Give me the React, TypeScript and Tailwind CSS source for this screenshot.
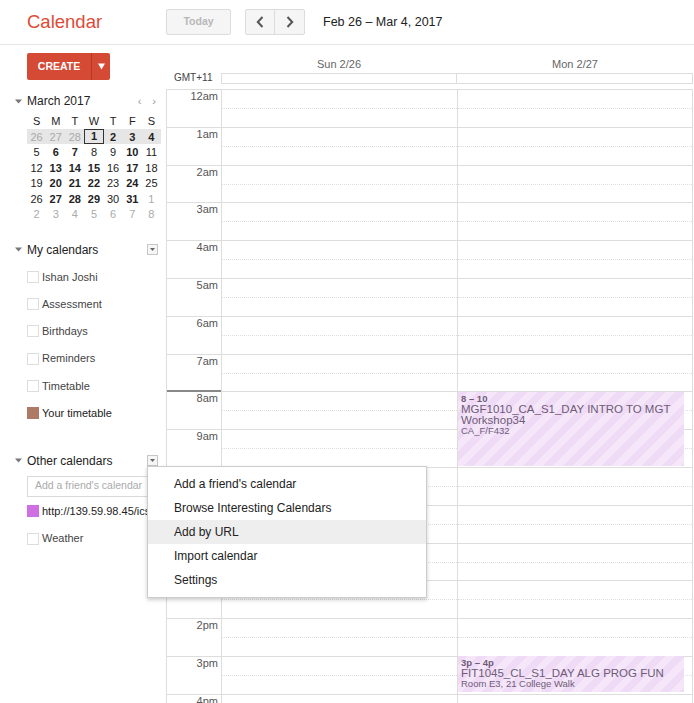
import React from "react";

const hours = [
  "12am", "1am", "2am", "3am", "4am", "5am", "6am", "7am", "8am", "9am", "10am", "11am",
  "12pm", "1pm", "2pm", "3pm", "4pm", "5pm",
];

// mini month: [label, kind] kind: o = other month, b = bold, n = normal
const weeks: [string, string][][] = [
  [["26", "o"], ["27", "o"], ["28", "o"], ["1", "b"], ["2", "b"], ["3", "b"], ["4", "b"]],
  [["5", "n"], ["6", "b"], ["7", "b"], ["8", "n"], ["9", "n"], ["10", "b"], ["11", "n"]],
  [["12", "n"], ["13", "b"], ["14", "b"], ["15", "b"], ["16", "n"], ["17", "b"], ["18", "n"]],
  [["19", "n"], ["20", "b"], ["21", "b"], ["22", "b"], ["23", "n"], ["24", "b"], ["25", "n"]],
  [["26", "n"], ["27", "b"], ["28", "b"], ["29", "b"], ["30", "n"], ["31", "b"], ["1", "o"]],
  [["2", "o"], ["3", "o"], ["4", "o"], ["5", "o"], ["6", "o"], ["7", "o"], ["8", "o"]],
];

const myCalendars = [
  { name: "Ishan Joshi" },
  { name: "Assessment" },
  { name: "Birthdays" },
  { name: "Reminders" },
  { name: "Timetable" },
  { name: "Your timetable", color: "bg-[#ad7b65]" },
];

const menuItems = [
  "Add a friend's calendar",
  "Browse Interesting Calendars",
  "Add by URL",
  "Import calendar",
  "Settings",
];

function Toggle() {
  return (
    <svg width="7" height="5" viewBox="0 0 7 5" className="shrink-0">
      <path d="M0 0.5 L7 0.5 L3.5 4.5 Z" fill="#777" />
    </svg>
  );
}

function MenuBox() {
  return (
    <div className="flex h-[11px] w-[11px] items-center justify-center border border-[#c6c6c6] bg-[#f6f6f6]">
      <svg width="5" height="3" viewBox="0 0 5 3">
        <path d="M0 0 L5 0 L2.5 3 Z" fill="#666" />
      </svg>
    </div>
  );
}

function Chevron({ dir }: { dir: "l" | "r" }) {
  return (
    <svg width="8" height="12" viewBox="0 0 8 12">
      <path
        d={dir === "l" ? "M6.5 1 L1.8 6 L6.5 11" : "M1.5 1 L6.2 6 L1.5 11"}
        fill="none"
        stroke="#555"
        strokeWidth="2"
      />
    </svg>
  );
}

function Sidebar() {
  return (
    <aside className="w-[166px] shrink-0">
      {/* Create */}
      <div className="mt-[8px] ml-[27px] flex h-[27px] w-[83px] rounded-[2px] bg-[#d44a35] text-white">
        <div className="flex w-[64px] items-center justify-center text-[10.5px] font-bold">CREATE</div>
        <div className="w-px bg-[#b33a28]" />
        <div className="flex flex-1 items-center justify-center">
          <svg width="7" height="7" viewBox="0 0 7 7">
            <path d="M0 0.5 L7 0.5 L3.5 6.5 Z" fill="#fff" />
          </svg>
        </div>
      </div>

      {/* Mini month */}
      <div className="mt-[14px] flex h-[14px] items-center pl-[15px] pr-[10px]">
        <Toggle />
        <span className="ml-[5px] text-[12px] text-[#222]">March 2017</span>
        <span className="ml-auto flex gap-[11px] text-[11px] text-[#999]">
          <span>‹</span>
          <span>›</span>
        </span>
      </div>
      <div className="ml-[27px] mt-[5px] w-[134px] text-[11px]">
        <div className="grid h-[15.5px] grid-cols-7 items-center text-center text-[#222]">
          {["S", "M", "T", "W", "T", "F", "S"].map((d, i) => (
            <span key={i}>{d}</span>
          ))}
        </div>
        {weeks.map((w, wi) => (
          <div
            key={wi}
            className={`grid h-[15.5px] grid-cols-7 items-center text-center ${wi === 0 ? "bg-[#e6e6e6]" : ""}`}
          >
            {w.map(([d, k], di) => (
              <span
                key={di}
                className={`${k === "o" ? "text-[#aaa]" : k === "b" ? "font-bold text-[#222]" : "text-[#222]"} ${
                  wi === 0 && di === 3 ? "border border-[#333] leading-[13px]" : ""
                }`}
              >
                {d}
              </span>
            ))}
          </div>
        ))}
      </div>

      {/* My calendars */}
      <div className="mt-[21px] flex h-[14px] items-center pl-[15px] pr-[8px]">
        <Toggle />
        <span className="ml-[5px] text-[12px] text-[#222]">My calendars</span>
        <span className="ml-auto">
          <MenuBox />
        </span>
      </div>
      <div className="mt-[7px] flex flex-col">
        {myCalendars.map((c) => (
          <div key={c.name} className="flex h-[27.2px] items-center pl-[27px]">
            <span className={`h-[12px] w-[12px] ${c.color ? c.color : "border border-[#ddd]"}`} />
            <span className={`ml-[3px] text-[11px] ${c.color ? "text-[#222]" : "text-[#444]"}`}>{c.name}</span>
          </div>
        ))}
      </div>

      {/* Other calendars */}
      <div className="mt-[27px] flex h-[14px] items-center pl-[15px] pr-[8px]">
        <Toggle />
        <span className="ml-[5px] text-[12px] text-[#222]">Other calendars</span>
        <span className="ml-auto">
          <MenuBox />
        </span>
      </div>
      <div className="ml-[27px] mt-[8px] flex h-[21px] w-[130px] items-center border border-[#d9d9d9] pl-[7px] text-[10.5px] text-[#aaa]">
        Add a friend's calendar
      </div>
      <div className="mt-[1px] flex h-[27px] items-center pl-[27px]">
        <span className="h-[12px] w-[12px] bg-[#cf6fe4]" />
        <span className="ml-[3px] whitespace-nowrap text-[11px] text-[#222]">http://139.59.98.45/ics</span>
      </div>
      <div className="flex h-[28px] items-center pl-[27px]">
        <span className="h-[12px] w-[12px] border border-[#ddd]" />
        <span className="ml-[3px] text-[11px] text-[#444]">Weather</span>
      </div>
    </aside>
  );
}

function Event({
  top,
  height,
  time,
  title,
  lines,
}: {
  top: string;
  height: string;
  time: string;
  title: string[];
  lines: string[];
}) {
  return (
    <div
      className={`absolute left-0 w-[226px] ${top} ${height} overflow-hidden bg-[repeating-linear-gradient(135deg,#f0dbf6_0px,#f0dbf6_7px,#f5e6f9_7px,#f5e6f9_14px)] pl-[3px] pt-[1px] text-[#6e5b77]`}
    >
      <div className="text-[9.5px] font-bold leading-[11px]">{time}</div>
      {title.map((t) => (
        <div key={t} className="text-[11.5px] leading-[11px]">
          {t}
        </div>
      ))}
      {lines.map((t) => (
        <div key={t} className="text-[9.5px] leading-[10px]">
          {t}
        </div>
      ))}
    </div>
  );
}

function Week() {
  return (
    <main className="min-w-0 flex-1">
      {/* Day headers */}
      <div className="flex h-[28px] items-end text-[11px] text-[#666]">
        <div className="w-[55px]" />
        <div className="w-[236px] pb-[1px] text-center">Sun 2/26</div>
        <div className="w-[236px] pb-[1px] text-center">Mon 2/27</div>
      </div>
      <div className="flex h-[16px]">
        <div className="w-[55px] pl-[8px] text-[10px] leading-[10px] text-[#444]">GMT+11</div>
        <div className="h-[11px] w-[236px] border border-[#ddd]" />
        <div className="h-[11px] w-[236px] border border-[#ddd] border-l-0" />
      </div>

      {/* Time grid */}
      <div className="flex border-l border-[#ddd]">
        <div className="w-[54px]">
          {hours.map((h, i) => (
            <div key={h} className="relative h-[37.8px] border-t border-[#ddd] pr-[3px] text-right text-[11px] leading-[12px] text-[#555]">
              {i === 8 && <div className="absolute -top-[2px] left-0 right-0 h-[2px] bg-[#888]" />}
              {h}
            </div>
          ))}
        </div>
        <div className="w-[236px] border-l border-[#ddd]">
          {hours.map((h) => (
            <div key={h} className="h-[37.8px] border-t border-[#ddd] pt-[18px]">
              <div className="border-t border-dotted border-[#ddd]" />
            </div>
          ))}
        </div>
        <div className="relative w-[236px] border-x border-[#ddd]">
          {hours.map((h) => (
            <div key={h} className="h-[37.8px] border-t border-[#ddd] pt-[18px]">
              <div className="border-t border-dotted border-[#ddd]" />
            </div>
          ))}
          <Event
            top="top-[303px]"
            height="h-[74px]"
            time="8 – 10"
            title={["MGF1010_CA_S1_DAY INTRO TO MGT", "Workshop34"]}
            lines={["CA_F/F432"]}
          />
          <Event
            top="top-[567px]"
            height="h-[36px]"
            time="3p – 4p"
            title={["FIT1045_CL_S1_DAY ALG PROG FUN"]}
            lines={["Room E3, 21 College Walk"]}
          />
        </div>
      </div>
    </main>
  );
}

export default function App() {
  return (
    <div className="relative h-[703px] w-[694px] overflow-hidden bg-white font-['Liberation_Sans',Arial,sans-serif]">
      {/* Top bar */}
      <header className="flex h-[45px] items-center border-b border-[#e5e5e5]">
        <div className="w-[166px] pl-[27px] text-[18.5px] text-[#dd4b39]">Calendar</div>
        <div className="flex h-[26px] w-[65px] items-center justify-center rounded-[2px] border border-[#dcdcdc] bg-[#f5f5f5] text-[10.5px] font-bold text-[#b8b8b8]">
          Today
        </div>
        <div className="ml-[14px] flex h-[26px] rounded-[2px] border border-[#dcdcdc] bg-[#f5f5f5]">
          <div className="flex w-[29px] items-center justify-center border-r border-[#dcdcdc]">
            <Chevron dir="l" />
          </div>
          <div className="flex w-[29px] items-center justify-center">
            <Chevron dir="r" />
          </div>
        </div>
        <div className="ml-[18px] text-[12.5px] text-[#222]">Feb 26 – Mar 4, 2017</div>
      </header>

      <div className="flex">
        <Sidebar />
        <Week />
      </div>

      {/* Other calendars menu */}
      <div className="absolute left-[147px] top-[466px] w-[280px] border border-[#ccc] bg-white py-[5px] shadow-[0_2px_4px_rgba(0,0,0,0.2)]">
        {menuItems.map((m) => (
          <div
            key={m}
            className={`flex h-[24px] items-center pl-[26px] text-[12px] text-[#222] ${m === "Add by URL" ? "bg-[#eee]" : ""}`}
          >
            {m}
          </div>
        ))}
      </div>
    </div>
  );
}
